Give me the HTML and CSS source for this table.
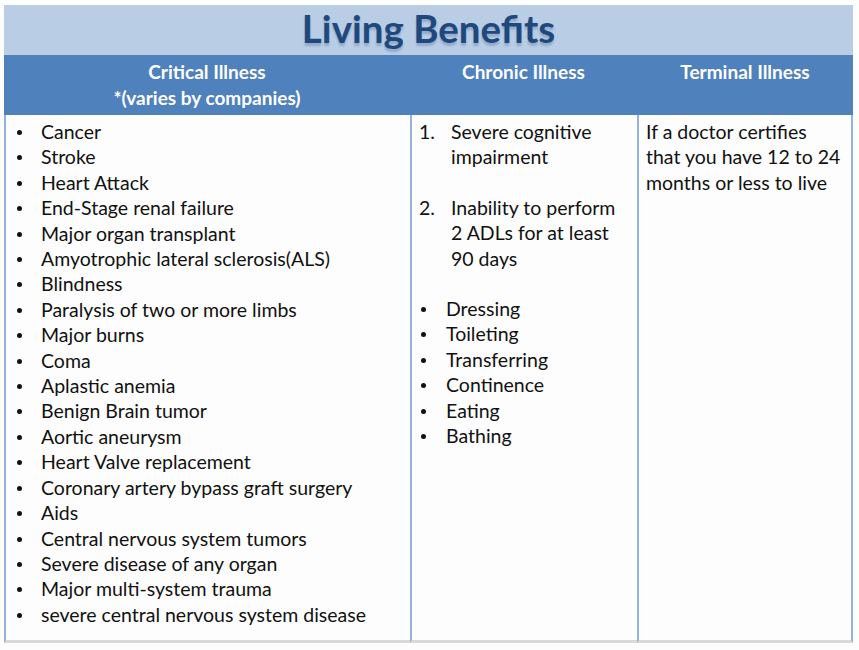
FILE: index.html
```html
<!DOCTYPE html>
<html>
<head>
<meta charset="utf-8">
<link rel="stylesheet" href="styles.css">
</head>
<body>
<div class="slide">
  <div class="title"><span>Living Benefits</span></div>
  <div class="table">
    <div class="th">Critical Illness<br>*(varies by companies)</div>
    <div class="th">Chronic Illness</div>
    <div class="th">Terminal Illness</div>
    <div class="td c1">
      <ul class="bullets">
        <li>Cancer</li>
        <li>Stroke</li>
        <li>Heart Attack</li>
        <li>End-Stage renal failure</li>
        <li>Major organ transplant</li>
        <li>Amyotrophic lateral sclerosis(ALS)</li>
        <li>Blindness</li>
        <li>Paralysis of two or more limbs</li>
        <li>Major burns</li>
        <li>Coma</li>
        <li>Aplastic anemia</li>
        <li>Benign Brain tumor</li>
        <li>Aortic aneurysm</li>
        <li>Heart Valve replacement</li>
        <li>Coronary artery bypass graft surgery</li>
        <li>Aids</li>
        <li>Central nervous system tumors</li>
        <li>Severe disease of any organ</li>
        <li>Major multi-system trauma</li>
        <li>severe central nervous system disease</li>
      </ul>
    </div>
    <div class="td c2">
      <ol class="nums">
        <li><span class="n">1.</span><span>Severe cognitive impairment</span></li>
        <li><span class="n">2.</span><span>Inability to perform 2 ADLs for at least 90 days</span></li>
      </ol>
      <ul class="bullets small">
        <li>Dressing</li>
        <li>Toileting</li>
        <li>Transferring</li>
        <li>Continence</li>
        <li>Eating</li>
        <li>Bathing</li>
      </ul>
    </div>
    <div class="td c3">
      <p class="plain">If a doctor certifies that you have 12 to 24 months or less to live</p>
    </div>
  </div>
</div>
</body>
</html>
```

FILE: styles.css
```css
html, body {
  margin: 0;
  padding: 0;
  background: #fdfdfd;
}
body {
  font-family: Lato, "Open Sans", sans-serif;
  color: #111;
}
.slide {
  width: 849px;
  margin: 5px 0 0 4px;
}
.title {
  height: 50px;
  background: #b9cde5;
  display: flex;
  justify-content: center;
  align-items: center;
}
.title span {
  font-size: 38.5px;
  font-weight: 700;
  color: #1f497d;
  text-shadow: 0 3px 2px rgba(31, 73, 125, 0.25);
  margin-top: -4px;
}
.table {
  display: grid;
  grid-template-columns: 406px 227px 216px;
  grid-template-rows: 60px 528px;
}
.th {
  background: #4f81bd;
  color: #fff;
  font-weight: 700;
  font-size: 19px;
  line-height: 26px;
  text-align: center;
  padding-top: 4px;
}
.td {
  background: #fdfdfd;
  border-left: 2px solid #95b3d7;
  border-bottom: 3px solid #d9d9d9;
  font-size: 19.5px;
  line-height: 25.4px;
  padding-top: 4px;
}
.td.c3 {
  border-right: 2px solid #95b3d7;
}
.bullets {
  list-style: none;
  margin: 0;
  padding: 0;
}
.bullets li {
  position: relative;
  padding-left: 35px;
}
.bullets li::before {
  content: "";
  position: absolute;
  left: 11px;
  top: 11px;
  width: 5px;
  height: 5px;
  border-radius: 50%;
  background: #111;
}
.c2 .bullets li {
  padding-left: 34px;
}
.c2 .bullets li::before {
  left: 9px;
}
.nums {
  list-style: none;
  margin: 0 0 25px 0;
  padding: 0 12px 0 0;
}
.nums li {
  display: flex;
  margin-bottom: 25px;
}
.nums .n {
  width: 39px;
  flex: none;
  padding-left: 7px;
  box-sizing: border-box;
}
.plain {
  margin: 0;
  padding: 0 10px 0 7px;
}
```
